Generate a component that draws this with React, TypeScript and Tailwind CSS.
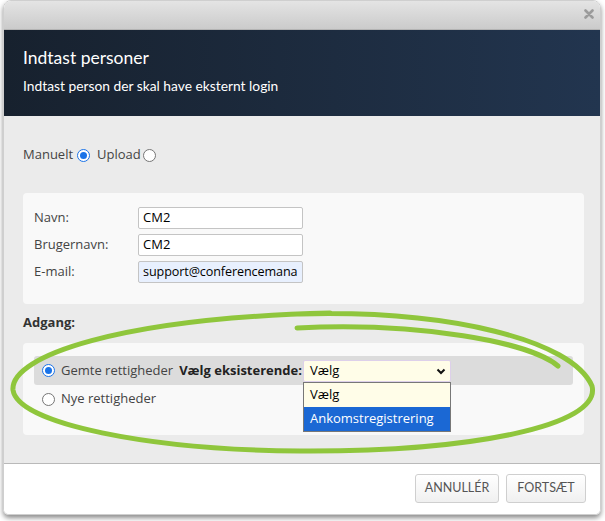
import React from "react";

function Radio({ checked = false }: { checked?: boolean }) {
	return checked ? (
		<span className="box-border flex h-[13px] w-[13px] shrink-0 items-center justify-center rounded-full border-[1.5px] border-[#1a73e8] bg-white">
			<span className="h-[7px] w-[7px] rounded-full bg-[#1a73e8]" />
		</span>
	) : (
		<span className="box-border block h-[13px] w-[13px] shrink-0 rounded-full border border-[#767676] bg-white" />
	);
}

function Field({
	label,
	value,
	autofill = false,
}: {
	label: string;
	value: string;
	autofill?: boolean;
}) {
	return (
		<div className="flex items-center">
			<span className="w-[104px] text-[13px] text-[#444]">{label}</span>
			<div
				className={`flex h-[22px] w-[165px] items-center overflow-hidden whitespace-nowrap rounded-[2px] border border-[#c4c4c4] px-[4px] text-black ${
					autofill
						? "bg-[#e8f0fe] text-[12.6px] tracking-[-0.1px]"
						: "bg-white text-[13px]"
				}`}
			>
				{value}
			</div>
		</div>
	);
}

export default function App() {
	return (
		<div className="relative h-[521px] w-[605px] overflow-hidden bg-white font-['Open_Sans',sans-serif]">
			<div className="ml-[3px] w-[598px] overflow-hidden rounded-t-[8px] rounded-b-[6px] border border-[#cfcfcf] shadow-[0_3px_5px_rgba(0,0,0,0.45)]">
				{/* title bar */}
				<div className="flex h-[29px] items-start justify-end border-b border-[#b3b3b3] bg-gradient-to-b from-[#e4e4e4] to-[#cbcbcb] pr-[6px] pt-[8px]">
					<svg width="10" height="10" viewBox="0 0 10 10">
						<path
							d="M1.5 1.5 L8.5 8.5 M8.5 1.5 L1.5 8.5"
							stroke="#9b9b9b"
							strokeWidth="2.6"
							strokeLinecap="round"
						/>
					</svg>
				</div>

				{/* header */}
				<div className="h-[86px] bg-gradient-to-r from-[#17212e] to-[#22354f] px-[19px] pt-[17px] font-['Lato',sans-serif] text-white">
					<p className="text-[17.5px] leading-[22px]">Indtast personer</p>
					<p className="mt-[8px] text-[13.8px] leading-[18px]">
						Indtast person der skal have eksternt login
					</p>
				</div>

				{/* body */}
				<div className="h-[347px] bg-[#ebebeb] pl-[19px] pr-[16px] pt-[29px] text-[13px] text-[#444]">
					<div className="flex h-[20px] items-center">
						<span>Manuelt</span>
						<span className="ml-[4px]">
							<Radio checked />
						</span>
						<span className="ml-[7px]">Upload</span>
						<span className="ml-[2px]">
							<Radio />
						</span>
					</div>

					<div className="mt-[28px] flex h-[111px] flex-col gap-[5px] rounded-[4px] bg-[#f9f9f9] pl-[11px] pt-[14px]">
						<Field label="Navn:" value="CM2" />
						<Field label="Brugernavn:" value="CM2" />
						<Field label="E-mail:" value="support@conferencemana" autofill />
					</div>

					<p className="mt-[9px] font-bold leading-[18px] text-[#333]">
						Adgang:
					</p>

					<div className="mt-[12px] h-[92px] rounded-[4px] bg-[#f9f9f9] px-[11px] pt-[13px]">
						<div className="flex h-[29px] items-center rounded-[3px] bg-[#dcdcdc] pl-[8px]">
							<Radio checked />
							<span className="ml-[6px]">Gemte rettigheder</span>
							<span className="ml-[6px] font-bold text-[#222]">
								Vælg eksisterende:
							</span>
							<div className="relative ml-[1px]">
								<div className="flex h-[22px] w-[148px] items-center justify-between rounded-[2px] border border-[#ddd0ea] bg-[#fffde8] pl-[6px] pr-[3px] text-black">
									<span>Vælg</span>
									<svg width="12" height="12" viewBox="0 0 12 12">
										<path
											d="M2.5 4.5 L6 8 L9.5 4.5"
											fill="none"
											stroke="#111"
											strokeWidth="2"
										/>
									</svg>
								</div>
								<div className="absolute left-0 top-[22px] z-10 w-[148px] border border-[#777] bg-[#fffde8] text-black">
									<div className="flex h-[24px] items-center px-[6px]">Vælg</div>
									<div className="flex h-[24px] items-center bg-[#1b68d4] px-[6px] text-white">
										Ankomstregistrering
									</div>
								</div>
							</div>
						</div>
						<div className="mt-[5px] flex h-[18px] items-center pl-[8px]">
							<Radio />
							<span className="ml-[6px]">Nye rettigheder</span>
						</div>
					</div>
				</div>

				{/* footer */}
				<div className="flex h-[51px] justify-end gap-[7px] border-t border-[#b9b9b9] bg-white pr-[14px] pt-[10px] font-['Lato',sans-serif]">
					<button className="h-[29px] w-[84px] rounded-[3px] border border-[#cfcfcf] bg-gradient-to-b from-white to-[#f0f0f0] text-[12.5px] text-[#555]">
						ANNULLÉR
					</button>
					<button className="h-[29px] w-[80px] rounded-[3px] border border-[#cfcfcf] bg-gradient-to-b from-white to-[#f0f0f0] text-[12.5px] text-[#555]">
						FORTSÆT
					</button>
				</div>
			</div>

			{/* hand-drawn highlight */}
			<svg
				className="pointer-events-none absolute left-0 top-0 z-20"
				width="605"
				height="521"
				viewBox="0 0 605 521"
			>
				<g
					fill="none"
					stroke="#8fc63c"
					strokeWidth="5"
					strokeLinecap="round"
				>
					<path d="M297 328 C 420 322, 530 342, 558 366" />
					<path d="M300 314 C 450 310, 572 340, 592 386 C 602 426, 470 452, 300 451 C 150 450, 18 424, 13 390 C 10 356, 120 318, 330 313" />
				</g>
			</svg>
		</div>
	);
}
